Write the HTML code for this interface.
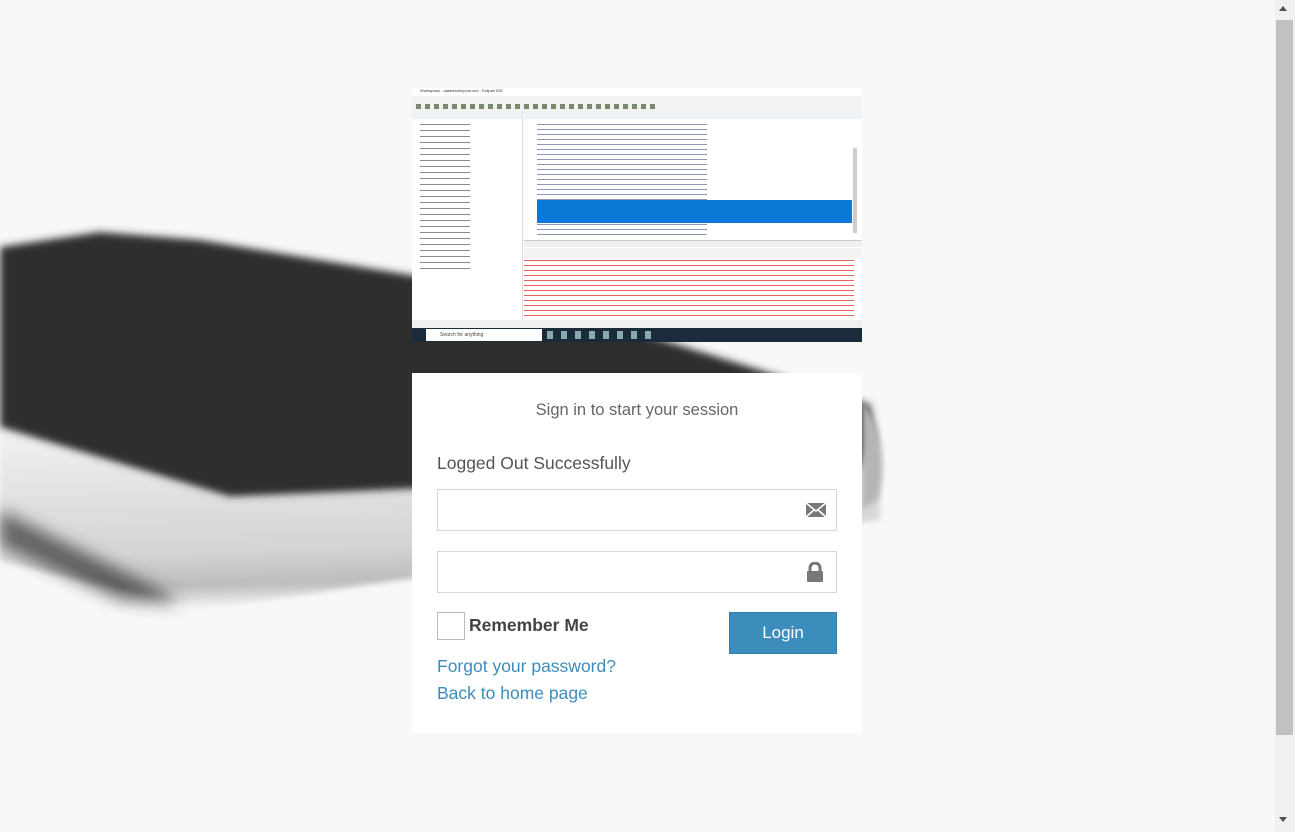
<!DOCTYPE html>
<html><head><meta charset="utf-8">
<style>
html,body{margin:0;padding:0;width:1295px;height:832px;overflow:hidden;background:#f8f8f8;font-family:"Liberation Sans",sans-serif;}
.abs{position:absolute}
#bg{position:absolute;left:0;top:0}
.sb{position:absolute;left:1275px;top:0;width:20px;height:832px;background:#f1f1f1}
.thumb{position:absolute;left:1276px;top:20px;width:17px;height:715px;background:#c1c1c1}
.shot{position:absolute;left:412px;top:88px;width:450px;height:254px;background:#fff;overflow:hidden}
.form{position:absolute;left:412px;top:373px;width:450px;height:360px;background:#fff}
.t1{position:absolute;left:0;width:450px;top:28px;text-align:center;font-size:16.5px;color:#666}
.t2{position:absolute;left:25px;top:80px;font-size:17.5px;color:#555}
.inp{position:absolute;left:25px;width:398px;height:40px;border:1px solid #d2d6de;background:#fff}
.lk{position:absolute;left:25px;font-size:17.5px;color:#3c8dbc}
</style></head><body>
<svg id="bg" width="1275" height="832">
<defs>
<filter id="b" x="-20%" y="-20%" width="140%" height="140%"><feGaussianBlur stdDeviation="4"/></filter>
<filter id="b2" x="-20%" y="-20%" width="140%" height="140%"><feGaussianBlur stdDeviation="3"/></filter>
<filter id="b3" x="-20%" y="-20%" width="140%" height="140%"><feGaussianBlur stdDeviation="8"/></filter>
<linearGradient id="fr" x1="0" y1="0" x2="0.15" y2="1">
<stop offset="0" stop-color="#f2f2f2"/><stop offset="0.4" stop-color="#e0e0e0"/><stop offset="0.7" stop-color="#d4d4d4"/><stop offset="0.88" stop-color="#bcbcbc"/><stop offset="1" stop-color="#f5f5f5"/></linearGradient>
</defs>
<path d="M0 430 L230 500 L880 470 L880 520 L400 580 L200 610 L0 560 Z" fill="url(#fr)" filter="url(#b2)"/>
<path d="M0 510 L80 550 L160 590 L180 605 L120 600 L0 545 Z" fill="#333" filter="url(#b3)" opacity="0.7"/>
<path d="M0 247 L100 232 L200 240 L500 290 L760 370 L870 405 L875 440 L860 470 L230 497 L0 427 Z" fill="#2d2d2d" filter="url(#b)"/>
<path d="M862 400 Q892 440 878 500 L862 510 Z" fill="#b5b5b5" filter="url(#b2)"/>
</svg>
<div class="sb"></div><div class="thumb"></div>
<div class="abs" style="left:1279px;top:6px;width:0;height:0;border-left:4px solid transparent;border-right:4px solid transparent;border-bottom:5px solid #505050"></div>
<div class="abs" style="left:1279px;top:817px;width:0;height:0;border-left:4px solid transparent;border-right:4px solid transparent;border-top:5px solid #505050"></div>

<div class="shot">
 <div class="abs" style="left:0;top:0;width:450px;height:8px;background:#fff;font-size:4px;color:#333;padding-left:8px">Workspace - datadriven/pom.xml - Eclipse IDE</div>
 <div class="abs" style="left:0;top:8px;width:450px;height:16px;background:#f3f3f3;border-bottom:1px solid #ddd"></div>
 <div class="abs" style="left:4px;top:16px;width:240px;height:5px;background:repeating-linear-gradient(90deg,#7a8a6a 0 5px,#f3f3f3 5px 9px)"></div>
 <div class="abs" style="left:0;top:24px;width:110px;height:215px;background:#fff;border-right:1px solid #ddd"></div>
 <div class="abs" style="left:0;top:24px;width:110px;height:7px;background:#eef1f5"></div>
 <div class="abs" style="left:112px;top:24px;width:338px;height:7px;background:#eef1f5"></div>
 <div class="abs" style="left:8px;top:34px;width:50px;height:150px;background:repeating-linear-gradient(#fff 0 2px,#8a8a8a 2px 3px,#fff 3px 6px)"></div>
 <div class="abs" style="left:125px;top:34px;width:170px;height:116px;background:repeating-linear-gradient(#fff 0 2px,#8a9ab6 2px 3px,#fff 3px 5px)"></div>
 <div class="abs" style="left:125px;top:112px;width:315px;height:23px;background:#0a78d7"></div>
 <div class="abs" style="left:441px;top:60px;width:4px;height:85px;background:#ccc"></div>
 <div class="abs" style="left:112px;top:152px;width:338px;height:6px;background:#f0f0f0;border-top:1px solid #ccc"></div>
 <div class="abs" style="left:112px;top:160px;width:338px;height:10px;background:#f3f3f3"></div>
 <div class="abs" style="left:112px;top:170px;width:330px;height:60px;background:repeating-linear-gradient(#fff 0 2px,#e86060 2px 3px,#fff 3px 5px)"></div>
 <div class="abs" style="left:0;top:232px;width:450px;height:8px;background:#f0f0f0"></div>
 <div class="abs" style="left:0;top:240px;width:450px;height:14px;background:#1c2b3c"></div>
 <div class="abs" style="left:14px;top:241px;width:116px;height:12px;background:#fff;font-size:5px;color:#444;line-height:12px;padding-left:14px;box-sizing:border-box">Search for anything</div>
 <div class="abs" style="left:135px;top:243px;width:110px;height:8px;background:repeating-linear-gradient(90deg,#8aa 0 6px,#1c2b3c 6px 14px)"></div>
</div>

<div class="form">
 <div class="t1">Sign in to start your session</div>
 <div class="t2">Logged Out Successfully</div>
 <div class="inp" style="top:116px"><svg class="abs" style="left:368px;top:12px" width="20" height="16"><rect x="0" y="1" width="20" height="14" fill="#777"/><path d="M0 1 L10 9 L20 1 M0 15 L8 8 M20 15 L12 8" stroke="#fff" stroke-width="1.6" fill="none"/></svg></div>
 <div class="inp" style="top:178px"><svg class="abs" style="left:368px;top:10px" width="18" height="20"><path d="M4 9 V6 a5 5 0 0 1 10 0 V9" stroke="#777" stroke-width="3" fill="none"/><rect x="1" y="9" width="16" height="11" rx="1" fill="#777"/></svg></div>
 <div class="abs" style="left:25px;top:239px;width:26px;height:26px;border:1px solid #bbb;background:#fff"></div>
 <div class="abs" style="left:57px;top:242px;font-size:17.5px;font-weight:bold;color:#444">Remember Me</div>
 <div class="abs" style="left:317px;top:239px;width:106px;height:40px;background:#3c8dbc;border:1px solid #367fa9;color:#fff;font-size:17px;text-align:center;line-height:40px">Login</div>
 <div class="lk" style="top:283px">Forgot your password?</div>
 <div class="lk" style="top:310px">Back to home page</div>
</div>
</body></html>
